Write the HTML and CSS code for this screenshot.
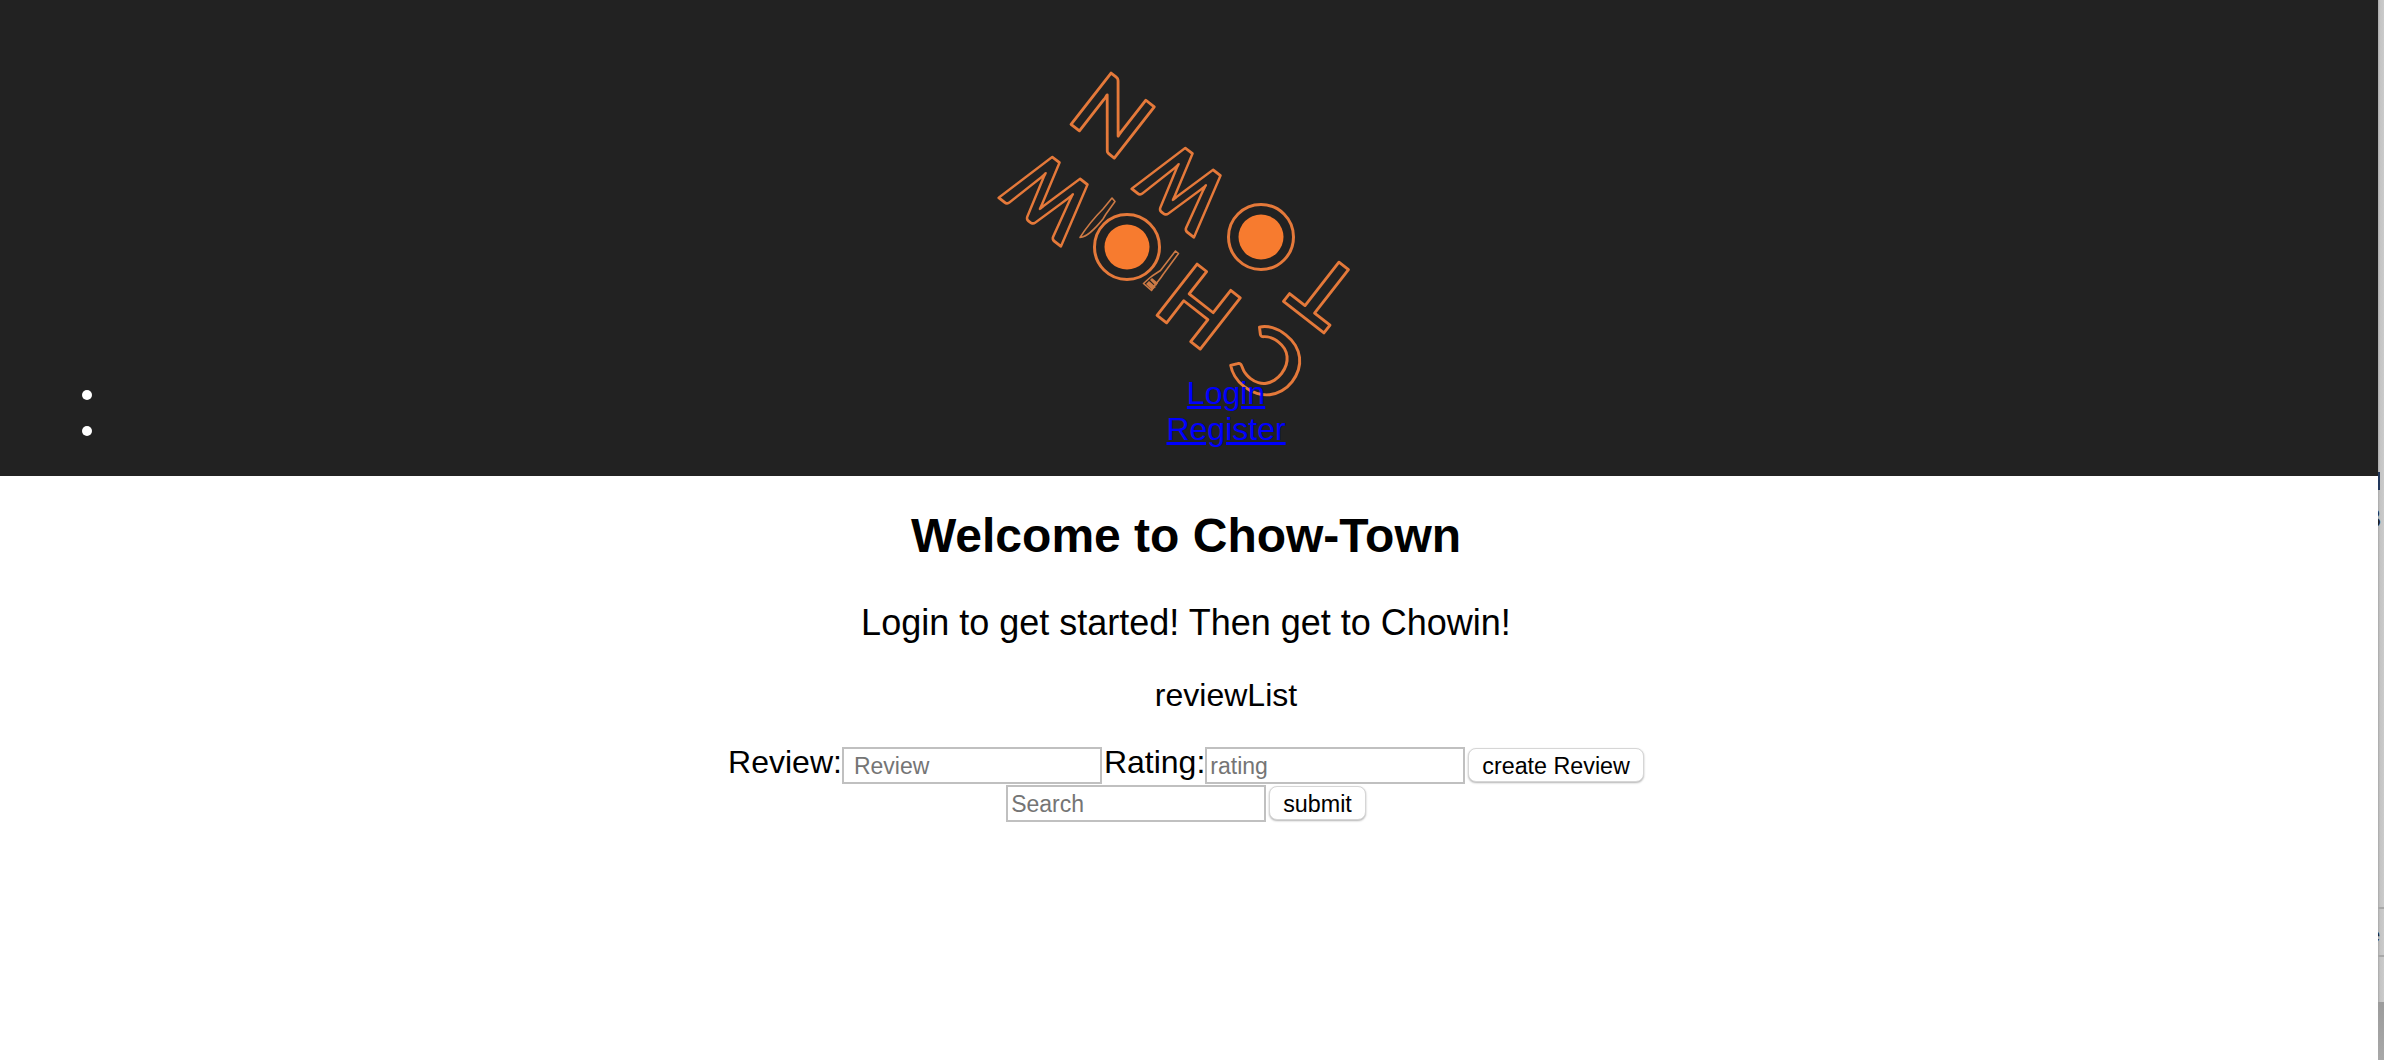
FILE: index.html
```html
<!DOCTYPE html>
<html lang="en">
<head>
<meta charset="utf-8">
<title>Chow-Town</title>
<link rel="stylesheet" href="styles.css">
</head>
<body>
<div class="window">
  <div class="page">
    <header class="site-header">
      <svg class="logo" viewBox="980 50 380 360" width="380" height="360" role="img" aria-label="Chow Town logo">
        <g class="logo-letters">
          <text transform="translate(1113 115) rotate(218)" y="32">N</text>
          <text transform="translate(1183 187) rotate(218) scale(.85 1)" y="32">W</text>
          <text transform="translate(1324 291) rotate(218)" y="32">T</text>
          <text transform="translate(1050 196) rotate(218) scale(.85 1)" y="32">W</text>
          <text transform="translate(1199 306) rotate(218)" y="32">H</text>
          <text transform="translate(1270 364) rotate(218) scale(1.08 1)" y="32">C</text>
        </g>
        <g class="plate">
          <circle class="plate-rim" cx="1261" cy="237" r="32.500"/>
          <circle class="plate-food" cx="1261" cy="237" r="22.500"/>
          <circle class="plate-rim" cx="1127" cy="247" r="32.500"/>
          <circle class="plate-food" cx="1127" cy="247" r="22.500"/>
        </g>
        <path class="cutlery" d="M1080 237.500C1087 237 1094 230 1103 219L1106 214L1115 201.500L1112 198L1103 209C1094 218 1086 228 1080 237.500Z"/>
        <path class="cutlery" d="M1175.500 251L1178.500 253.500L1163 274.500C1161 278 1158 281 1155 285L1151.500 290.500L1143.500 283.500L1149 278.500C1153 275 1157 273 1160.500 270.500Z"/>
        <path class="cutlery-tines" d="M1149 281L1156 287L1152 290L1146 284ZM1152 278L1158 283L1156 286L1150 280Z"/>
      </svg>
      <ul class="nav-list">
        <li><a href="#login">Login</a></li>
        <li><a href="#register">Register</a></li>
      </ul>
    </header>
    <main class="content">
      <h1 class="title">Welcome to Chow-Town</h1>
      <p class="lead">Login to get started! Then get to Chowin!</p>
      <p class="list-name">reviewList</p>
      <form class="form-row">
        <label class="field-label">Review:</label><input class="text-input indented" type="text" placeholder="Review"><label class="field-label spaced">Rating:</label><input class="text-input" type="text" placeholder="rating"><button class="btn" type="button">create Review</button>
      </form>
      <form class="form-row">
        <input class="text-input" type="text" placeholder="Search"><button class="btn" type="button">submit</button>
      </form>
    </main>
  </div>
  <aside class="edge">
    <span class="edge-bar"></span>
    <span class="edge-glyph-large">B</span>
    <span class="edge-rule first"></span>
    <span class="edge-glyph-small">e</span>
    <span class="edge-rule second"></span>
    <span class="edge-shade"></span>
  </aside>
</div>
</body>
</html>
```

FILE: styles.css
```css
html, body {
  margin: 0;
  height: 100%;
  overflow: hidden;
  background: #fff;
}

body {
  font-family: "Liberation Sans", Arial, sans-serif;
  font-size: 32px;
  color: #000;
}

.window {
  display: flex;
  height: 1060px;
}

.page {
  flex: 1;
  min-width: 0;
}

.site-header {
  display: grid;
  height: 476px;
  background: #222222;
}

.logo {
  grid-area: 1 / 1;
  display: block;
  margin: 50px 0 0 980px;
}

.logo-letters text {
  font-family: Lato, "Liberation Sans", Arial, sans-serif;
  font-size: 90px;
  font-weight: 700;
  text-anchor: middle;
  fill: none;
  stroke: #e5793a;
  stroke-width: 2.8px;
  stroke-linejoin: round;
}

.plate-rim {
  fill: none;
  stroke: #e5793a;
  stroke-width: 3px;
}

.plate-food {
  fill: #f77b2f;
}

.cutlery {
  fill: none;
  stroke: #cd7a45;
  stroke-width: 1.6px;
  stroke-linejoin: round;
}

.cutlery-tines {
  fill: #cd7a45;
}

.nav-list {
  grid-area: 1 / 1;
  align-self: start;
  position: relative;
  margin: 375px 0 0;
  padding: 0 34px 0 108px;
  color: #fff;
  line-height: 36px;
  text-align: center;
}

.nav-list a {
  color: #0000ff;
}

.content {
  text-align: center;
  padding: 27px 6px 0 0;
}

.title {
  margin: 0 0 33px;
  font-size: 48px;
  line-height: 66px;
  font-weight: 700;
}

.lead {
  margin: 0 0 34px;
  font-size: 36px;
  line-height: 41px;
}

.list-name {
  margin: 0 0 32px;
  padding-left: 80px;
  font-size: 32px;
  line-height: 37px;
}

.form-row {
  display: flex;
  justify-content: center;
  align-items: center;
  height: 38px;
}

.field-label {
  font-size: 32px;
  line-height: 37px;
  position: relative;
  top: -3px;
}

.field-label.spaced {
  margin-left: 2px;
}

.text-input {
  box-sizing: border-box;
  width: 260px;
  height: 37px;
  padding: 2px 3px 0;
  border: 2px solid #c0c0c0;
  border-radius: 0;
  background: #fff;
  font-family: "Liberation Sans", Arial, sans-serif;
  font-size: 23px;
  color: #000;
  outline: none;
}

.text-input.indented {
  padding-left: 10px;
}

.text-input::placeholder {
  color: #757575;
  opacity: 1;
}

.btn {
  box-sizing: border-box;
  height: 34px;
  margin-left: 3px;
  padding: 2px 13px 0;
  border: 1px solid #d6d6d6;
  border-radius: 8px;
  background: #fff;
  box-shadow: 0 1px 2px rgba(0, 0, 0, 0.3);
  font-family: "Liberation Sans", Arial, sans-serif;
  font-size: 23.3px;
  color: #000;
}

.edge {
  flex: 0 0 6px;
  display: flex;
  flex-direction: column;
  overflow: hidden;
  background: linear-gradient(90deg, #a9a9a9 0, #c4c4c4 2px, #cbcbcb 100%);
}

.edge-bar {
  flex: none;
  width: 2px;
  height: 18px;
  margin-top: 472px;
  background: #22385c;
}

.edge-glyph-large {
  flex: none;
  margin: 13px 0 0 -14px;
  font-size: 26px;
  line-height: 30px;
  font-weight: 400;
  color: #222;
}

.edge-rule {
  flex: none;
  height: 2px;
  background: #a8a8a8;
}

.edge-rule.first {
  margin-top: 374px;
}

.edge-glyph-small {
  flex: none;
  margin: 14px 0 0 -9px;
  font-size: 20px;
  line-height: 24px;
  color: #222;
}

.edge-rule.second {
  margin-top: 8px;
}

.edge-shade {
  flex: 1;
  margin-top: 45px;
  background: linear-gradient(180deg, #9c9c9c 0, #a8a8a8 100%);
}
```
